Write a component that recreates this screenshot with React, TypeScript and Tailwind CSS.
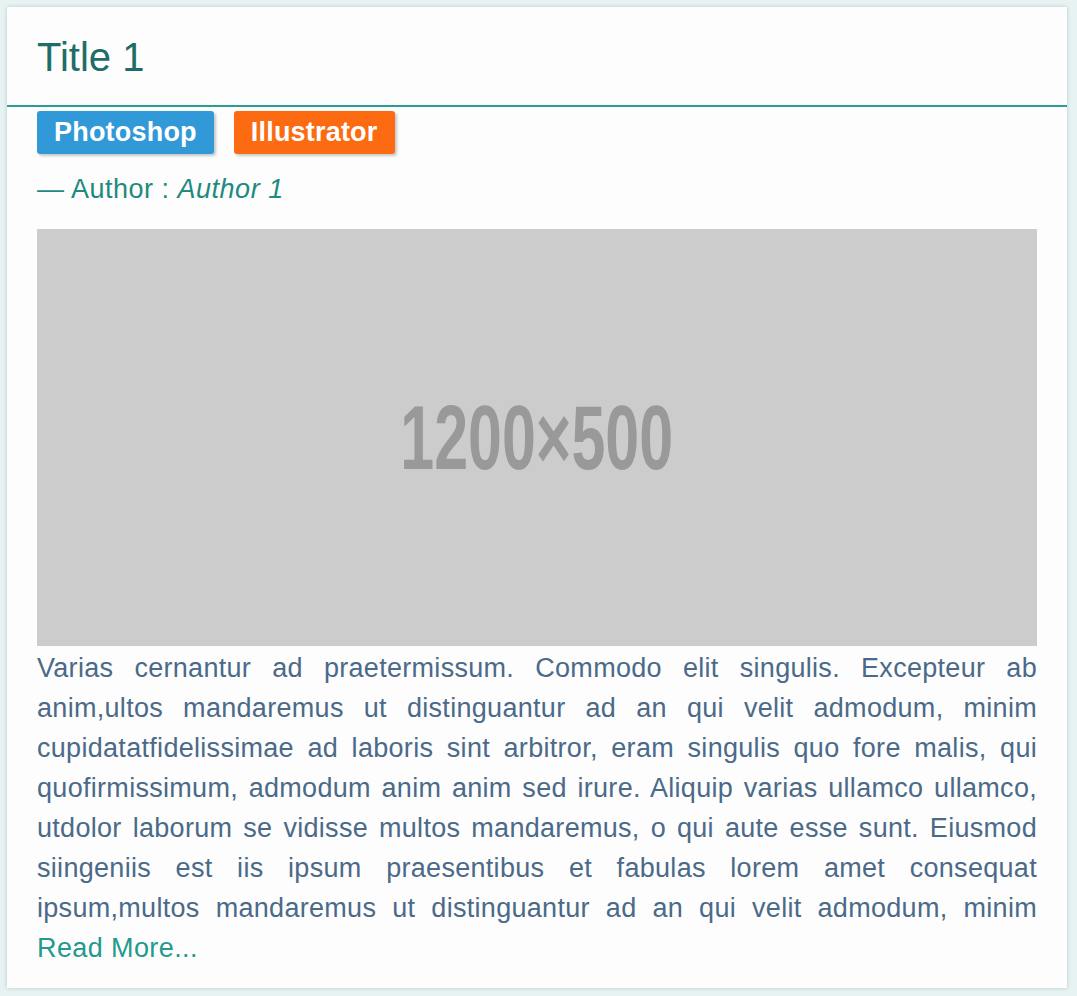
const TEXT =
  'Varias cernantur ad praetermissum. Commodo elit singulis. Excepteur ab anim,ultos mandaremus ut distinguantur ad an qui velit admodum, minim cupidatatfidelissimae ad laboris sint arbitror, eram singulis quo fore malis, qui quofirmissimum, admodum anim anim sed irure. Aliquip varias ullamco ullamco, utdolor laborum se vidisse multos mandaremus, o qui aute esse sunt. Eiusmod siingeniis est iis ipsum praesentibus et fabulas lorem amet consequat ipsum,multos mandaremus ut distinguantur ad an qui velit admodum, minim';

const TAGS = [
  { label: 'Photoshop', color: 'bg-[#3199d7]' },
  { label: 'Illustrator', color: 'bg-[#fc6a12]' },
];

const Badge = ({ label, color }: { label: string; color: string }) => (
  <span
    className={`${color} flex h-[43px] items-center rounded-[3px] px-[17px] text-[27px] font-bold leading-none tracking-[0.2px] text-white shadow-[2px_2px_3px_rgba(0,0,0,0.22)]`}
  >
    {label}
  </span>
);

const App = () => {
  return (
    <div className="min-h-[996px] bg-[#e7f2f2] p-[7px] font-['Liberation_Sans',Arial,sans-serif]">
      <div className="w-[1060px] bg-[#fdfdfd] shadow-[0_0_4px_rgba(0,40,40,0.18)]">
        {/* Header */}
        <div className="border-b-2 border-[#2a9d95] px-[30px] pt-[28px] pb-[26px]">
          <h1 className="text-[40px] leading-[44px] text-[#1e6d66]">Title 1</h1>
        </div>

        <div className="px-[30px] pt-[4px] pb-[20px]">
          {/* Tags */}
          <div className="flex gap-5">
            {TAGS.map((t) => (
              <Badge key={t.label} label={t.label} color={t.color} />
            ))}
          </div>

          {/* Author */}
          <p className="mt-[15px] mb-[20px] text-[27px] leading-[40px] tracking-[0.5px] text-[#1f8a80]">
            — Author : <em>Author 1</em>
          </p>

          {/* Image placeholder */}
          <div className="flex h-[417px] w-[1000px] items-center justify-center overflow-hidden bg-[#cccccc]">
            <span className="scale-x-[0.67] text-[91px] font-bold leading-none text-[#999999]">1200×500</span>
          </div>

          {/* Body: seven lines shown, last one justified too (text is cut in the source) */}
          <p className="pt-[2px] text-justify text-[27px] leading-[40px] tracking-[0.3px] text-[#4b6a89] [text-align-last:justify]">
            {TEXT}
          </p>
          <a href="#" className="block text-[27px] leading-[40px] tracking-[0.4px] text-[#24998f]">
            Read More...
          </a>
        </div>
      </div>
    </div>
  );
};

export default App;
